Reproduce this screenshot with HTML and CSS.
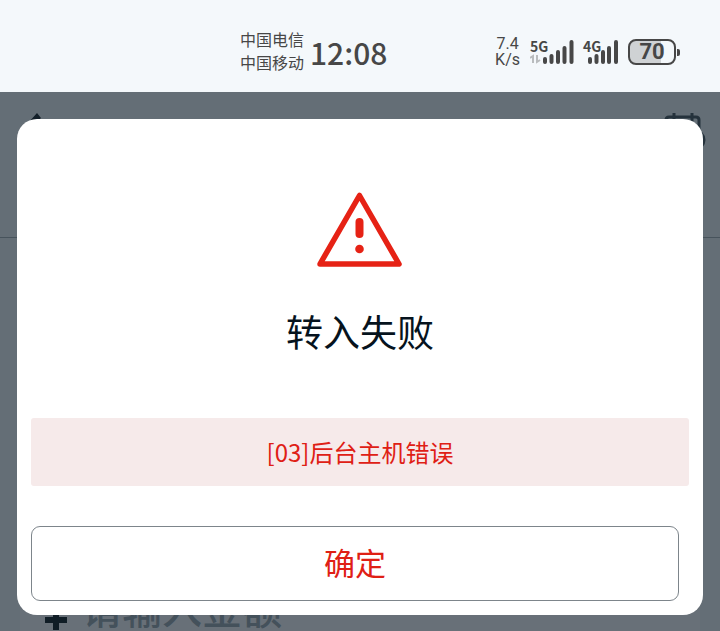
FILE: index.html
```html
<!DOCTYPE html>
<html lang="zh-CN">
<head>
<meta charset="utf-8">
<meta name="viewport" content="width=device-width, initial-scale=1">
<title>转入失败</title>
<link rel="stylesheet" href="styles.css">
</head>
<body>
<header class="status">
  <div class="status-clock">
    <div class="carriers"><span>中国电信</span><span>中国移动</span></div>
    <time class="time">12:08</time>
  </div>
  <div class="status-icons">
    <div class="speed"><span>7.4</span><span>K/s</span></div>
    <div class="signal">
      <span class="network">5G</span>
      <svg width="44" height="26" viewBox="0 0 44 26" aria-hidden="true">
        <path d="M0 19l3-2v7M7 16v7l3-2" fill="none" stroke="#b9bcbe" stroke-width="2"/>
        <path d="M15 20v3M21.500 17v6M28 13v10M34.500 9v14M41.500 3v20" stroke="#474747" stroke-width="4" stroke-linecap="round"/>
      </svg>
    </div>
    <div class="signal signal-second">
      <span class="network">4G</span>
      <svg width="36" height="26" viewBox="0 0 36 26" aria-hidden="true">
        <path d="M7 20v3M13.500 17v6M20 13v10M26 9v14M33 3v20" stroke="#474747" stroke-width="4" stroke-linecap="round"/>
      </svg>
    </div>
    <div class="battery"><span class="battery-level">70</span></div>
  </div>
</header>
<main class="screen">
  <div class="page">
    <div class="toolbar">
      <svg class="back" width="28" height="40" viewBox="0 0 28 40" aria-hidden="true"><path d="M17 1l4 5L7 20l14 14-4 5L0 20Z" fill="#14202a"/></svg>
      <svg class="calendar" width="46" height="44" viewBox="0 0 46 44" aria-hidden="true">
        <g fill="none" stroke="#25323c" stroke-width="3"><path d="M37 20V8q0-3-3-3H7q-3 0-3 3v27q0 3 3 3h16"/><path d="M12 1v8M30 1v8"/><circle cx="33" cy="28" r="9"/></g>
      </svg>
    </div>
    <div class="amount">
      <svg width="24" height="24" viewBox="0 0 24 24" aria-hidden="true"><path d="M1 13h22M12 0v23" stroke="#101d26" stroke-width="6"/></svg>
      <span>请输入金额</span>
    </div>
  </div>
  <section class="dialog" role="alertdialog" aria-modal="true" aria-labelledby="dialog-title" aria-describedby="dialog-error">
    <svg class="warning" width="88" height="78" viewBox="0 0 88 78" aria-hidden="true">
      <path d="M43.500 4.500L83 73H4Z" fill="none" stroke="#e62215" stroke-width="5.500" stroke-linejoin="round"/>
      <path d="M43.500 31v12" stroke="#e62215" stroke-width="8" stroke-linecap="round"/>
      <circle cx="43.500" cy="58" r="4.300" fill="#e62215"/>
    </svg>
    <h1 class="title" id="dialog-title">转入失败</h1>
    <p class="error" id="dialog-error">[03]后台主机错误</p>
    <button class="confirm" type="button">确定</button>
  </section>
</main>
</body>
</html>
```
FILE: styles.css
```css
* {
  box-sizing: border-box;
}

body {
  margin: 0;
  min-height: 100vh;
  display: flex;
  flex-direction: column;
  font-family: Roboto, "Noto Sans CJK SC", sans-serif;
  color: #474747;
  background: #f4f8fb;
}

.status {
  height: 92px;
  padding: 12px 44px 0 240px;
  display: flex;
  align-items: center;
  justify-content: space-between;
}

.status-clock,
.status-icons {
  display: flex;
  align-items: center;
}

.status-clock {
  gap: 6px;
}

.carriers {
  display: flex;
  flex-direction: column;
  font-size: 16px;
  line-height: 23px;
}

.time {
  font-family: "Noto Sans CJK SC", sans-serif;
  font-size: 30px;
  font-weight: 500;
  line-height: 40px;
}

.speed {
  display: flex;
  flex-direction: column;
  align-items: center;
  margin-right: 10px;
  font-size: 16px;
  line-height: 16px;
}

.signal {
  display: grid;
}

.signal > * {
  grid-area: 1 / 1;
}

.signal-second {
  margin: 0 9px;
}

.network {
  font-family: "Noto Sans CJK SC", sans-serif;
  font-size: 14px;
  font-weight: 700;
  line-height: 14px;
}

.battery {
  position: relative;
  width: 48px;
  height: 26px;
  border: 2px solid #474747;
  border-radius: 8px;
  background: linear-gradient(90deg, #cfd2d4 70%, transparent 70%);
  text-align: center;
}

.battery::after {
  content: "";
  position: absolute;
  top: 8px;
  right: -6px;
  width: 3px;
  height: 7px;
  border-radius: 0 2px 2px 0;
  background: #474747;
}

.battery-level {
  font-size: 22px;
  font-weight: 700;
  line-height: 22px;
}

.screen {
  flex: 1;
  position: relative;
  display: flex;
  flex-direction: column;
  padding: 27px 17px 16px;
  background: #646e76;
}

.page {
  position: absolute;
  inset: 0;
  overflow: hidden;
  display: flex;
  flex-direction: column;
  justify-content: space-between;
}

.toolbar {
  height: 146px;
  padding: 20px 12px 0 20px;
  display: flex;
  align-items: flex-start;
  justify-content: space-between;
  border-bottom: 1px solid #47535c;
}

.amount {
  margin: 0 20px;
  padding-left: 24px;
  display: flex;
  align-items: flex-end;
  gap: 14px;
  background: #687078;
  color: #44515b;
  font-size: 40px;
  font-weight: 500;
  line-height: 40px;
}

.dialog {
  position: relative;
  flex: 1;
  padding: 72px 14px 14px;
  display: flex;
  flex-direction: column;
  align-items: center;
  border-radius: 20px;
  background: #fff;
}

.title {
  margin: 35px 0 60px;
  color: #06131d;
  font-family: "Noto Sans CJK SC", sans-serif;
  font-size: 37px;
  font-weight: 400;
  line-height: 54px;
}

.error {
  align-self: stretch;
  margin: 0 0 40px;
  border-radius: 3px;
  background: #f6eaea;
  color: #df2015;
  font-family: "Noto Sans CJK SC", sans-serif;
  font-size: 24px;
  line-height: 68px;
  text-align: center;
}

.confirm {
  align-self: stretch;
  height: 75px;
  margin-right: 10px;
  padding: 0 0 4px;
  border: 1px solid #7d858b;
  border-radius: 9px;
  background: #fff;
  color: #df2015;
  font-family: "Noto Sans CJK SC", sans-serif;
  font-size: 31px;
  font-weight: 400;
}
```
